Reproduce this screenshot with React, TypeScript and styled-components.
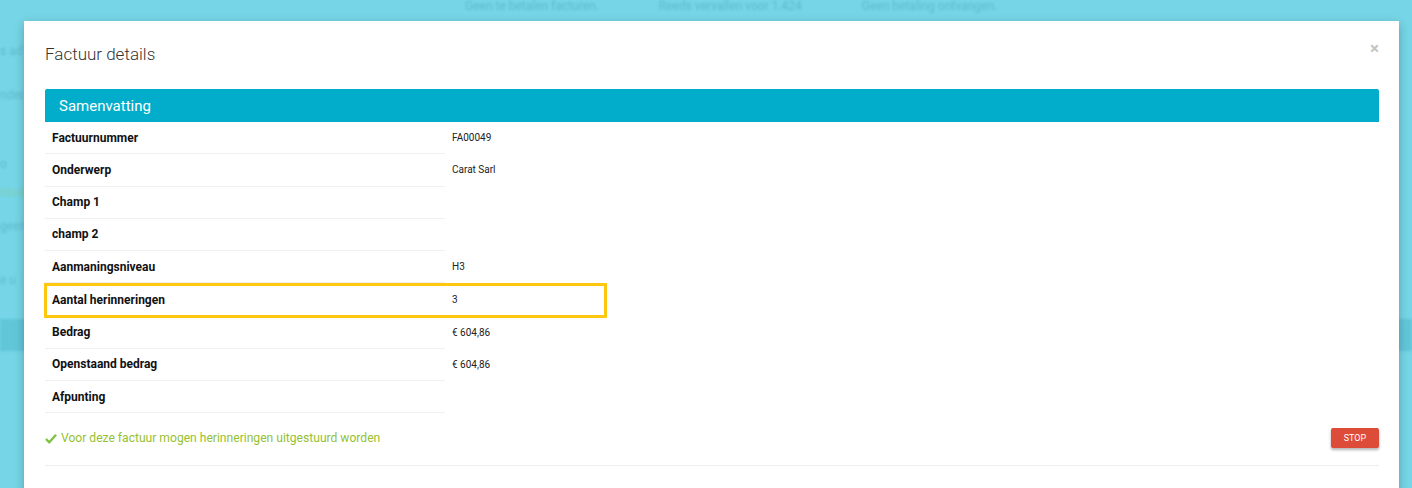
import React from "react";
import styled, { createGlobalStyle } from "styled-components";

const GlobalStyle = createGlobalStyle`
  html, body {
    margin: 0;
    padding: 0;
  }
  body {
    font-family: Roboto, "Liberation Sans", Arial, sans-serif;
    background: #76d5e6;
    overflow: hidden;
  }
`;

const Page = styled.div`
  position: relative;
  width: 1412px;
  height: 488px;
  overflow: hidden;
  background: #76d5e6;
`;

// faded application behind the modal backdrop
const Backdrop = styled.div`
  display: flex;
  flex-direction: column;
  filter: blur(1.2px);
  color: #5fbccf;
  font-size: 12px;
`;

const TopStrip = styled.div`
  display: flex;
  gap: 60px;
  padding: 0 0 0 465px;
  height: 22px;
  align-items: flex-start;
  line-height: 12px;
`;

const SideLine = styled.div<{ top: number; tone?: string }>`
  margin-top: ${(p) => p.top}px;
  color: ${(p) => p.tone || "#5fbccf"};
  white-space: nowrap;
`;

const SideBand = styled.div`
  margin-top: 32px;
  height: 32px;
  background: #62c6d9;
`;

const Modal = styled.div`
  position: absolute;
  top: 21px;
  left: 24px;
  width: 1375px;
  height: 500px;
  background: #fff;
  box-shadow: 0 3px 9px rgba(0, 0, 0, 0.25);
  padding: 0 20px 0 21px;
  box-sizing: border-box;
`;

const Header = styled.div`
  display: flex;
  justify-content: space-between;
  align-items: flex-start;
  height: 68px;
`;

const Title = styled.h4`
  margin: 22px 0 0;
  font-size: 17px;
  font-weight: 300;
  color: #333;
  line-height: 22px;
`;

const Close = styled.span`
  margin: 19px 0 0 0;
  font-size: 17px;
  font-weight: 700;
  color: #c4c4c4;
  line-height: 16px;
`;

const Panel = styled.section`
  display: flex;
  flex-direction: column;
`;

const PanelHead = styled.div`
  background: #02adcb;
  color: #fff;
  height: 33px;
  display: flex;
  align-items: center;
  padding-left: 14px;
  font-size: 15px;
  font-weight: 400;
  border-radius: 2px 2px 0 0;
`;

const Table = styled.div`
  display: flex;
  flex-direction: column;
  width: 561px;
`;

const Row = styled.div<{ highlight?: boolean }>`
  display: grid;
  grid-template-columns: 400px 1fr;
  height: 32.25px;
  box-sizing: border-box;
  outline: ${(p) => (p.highlight ? "3px solid #fec811" : "none")};
  outline-offset: -2px;
  margin: ${(p) => (p.highlight ? "1px 0 0" : "0")};
`;

const Label = styled.div`
  display: flex;
  align-items: center;
  padding-left: 7px;
  font-size: 12px;
  font-weight: 700;
  color: #111;
  border-bottom: 1px solid #f0f0f0;
`;

const Value = styled.div`
  padding: 10px 0 0 7px;
  font-size: 10px;
  color: #222;
`;

const Footer = styled.div`
  display: flex;
  justify-content: space-between;
  align-items: center;
  margin-top: 15px;
  padding-bottom: 17px;
  border-bottom: 1px solid #eee;
`;

const Notice = styled.div`
  display: flex;
  align-items: center;
  gap: 4px;
  color: #96bf32;
  font-size: 12.1px;
`;

const StopButton = styled.button`
  background: #dd4b39;
  color: #fff;
  border: none;
  border-radius: 2px;
  width: 48px;
  height: 20px;
  font-family: inherit;
  font-size: 9px;
  text-transform: uppercase;
  box-shadow: 0 2px 3px rgba(0, 0, 0, 0.3);
  padding: 0;
`;

const rows: { label: string; value?: string; highlight?: boolean }[] = [
  { label: "Factuurnummer", value: "FA00049" },
  { label: "Onderwerp", value: "Carat Sarl" },
  { label: "Champ 1" },
  { label: "champ 2" },
  { label: "Aanmaningsniveau", value: "H3" },
  { label: "Aantal herinneringen", value: "3", highlight: true },
  { label: "Bedrag", value: "€ 604,86" },
  { label: "Openstaand bedrag", value: "€ 604,86" },
  { label: "Afpunting" },
];

const Check = () => (
  <svg width="12" height="11" viewBox="0 0 12 11">
    <path d="M1 6 L4.3 9.3 L11 1.8" fill="none" stroke="#7fc242" strokeWidth="2.4" strokeLinejoin="round" />
  </svg>
);

export default function App() {
  return (
    <>
      <GlobalStyle />
      <Page>
        <Backdrop>
          <TopStrip>
            <span>Geen te betalen facturen.</span>
            <span>Reeds vervallen voor 1.424</span>
            <span>Geen betaling ontvangen.</span>
          </TopStrip>
          <SideLine top={22}>s ad</SideLine>
          <SideLine top={30}>nder</SideLine>
          <SideLine top={55}>o</SideLine>
          <SideLine top={14} tone="#7ccfb9">staan</SideLine>
          <SideLine top={20}>geen</SideLine>
          <SideLine top={40}>e u</SideLine>
          <SideBand />
        </Backdrop>
        <Modal>
          <Header>
            <Title>Factuur details</Title>
            <Close>×</Close>
          </Header>
          <Panel>
            <PanelHead>Samenvatting</PanelHead>
            <Table>
              {rows.map((r) => (
                <Row key={r.label} highlight={r.highlight}>
                  <Label>{r.label}</Label>
                  <Value>{r.value}</Value>
                </Row>
              ))}
            </Table>
            <Footer>
              <Notice>
                <Check />
                Voor deze factuur mogen herinneringen uitgestuurd worden
              </Notice>
              <StopButton>Stop</StopButton>
            </Footer>
          </Panel>
        </Modal>
      </Page>
    </>
  );
}
